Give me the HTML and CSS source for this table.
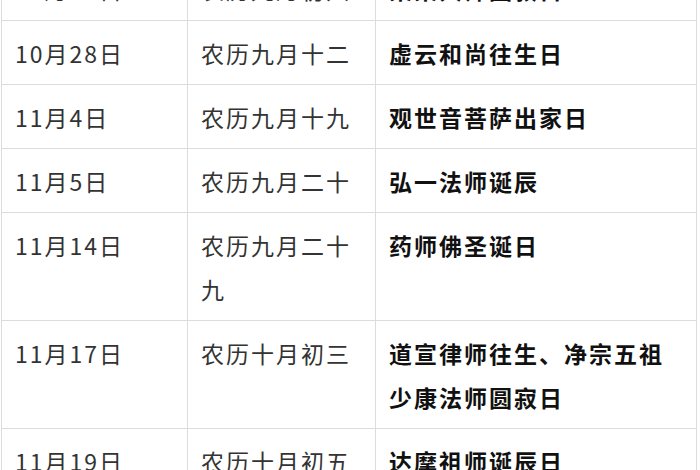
FILE: index.html
```html
<!DOCTYPE html>
<html lang="zh-CN">
<head>
<meta charset="utf-8">
<link rel="stylesheet" href="styles.css">
</head>
<body>
<table class="cal">
  <colgroup>
    <col class="c1"><col class="c2"><col class="c3">
  </colgroup>
  <tbody>
    <tr><td>10月22日</td><td>农历九月初六</td><td class="ev">某某大师圆寂日</td></tr>
    <tr><td>10月28日</td><td>农历九月十二</td><td class="ev">虚云和尚往生日</td></tr>
    <tr><td>11月4日</td><td>农历九月十九</td><td class="ev">观世音菩萨出家日</td></tr>
    <tr><td>11月5日</td><td>农历九月二十</td><td class="ev">弘一法师诞辰</td></tr>
    <tr><td>11月14日</td><td>农历九月二十九</td><td class="ev">药师佛圣诞日</td></tr>
    <tr><td>11月17日</td><td>农历十月初三</td><td class="ev">道宣律师往生、净宗五祖少康法师圆寂日</td></tr>
    <tr><td>11月19日</td><td>农历十月初五</td><td class="ev">达摩祖师诞辰日</td></tr>
  </tbody>
</table>
</body>
</html>
```
FILE: styles.css
```css
html, body {
  margin: 0;
  padding: 0;
  background: #fff;
  overflow: hidden;
}
.cal {
  margin: -44px 0 0 1px;
  border-collapse: collapse;
  table-layout: fixed;
  width: 695px;
  font-family: "Noto Sans CJK SC", "Microsoft YaHei", sans-serif;
  font-size: 23px;
  letter-spacing: 2px;
  line-height: 44px;
  color: #333;
}
.c1 { width: 186px; }
.c2 { width: 188px; }
.c3 { width: 321px; }
.cal td {
  border: 1px solid #dcdcdc;
  padding: 10px 10px 9px 13px;
  vertical-align: top;
  word-break: break-all;
}
.cal td.ev {
  font-weight: 700;
  color: #111;
}
```
